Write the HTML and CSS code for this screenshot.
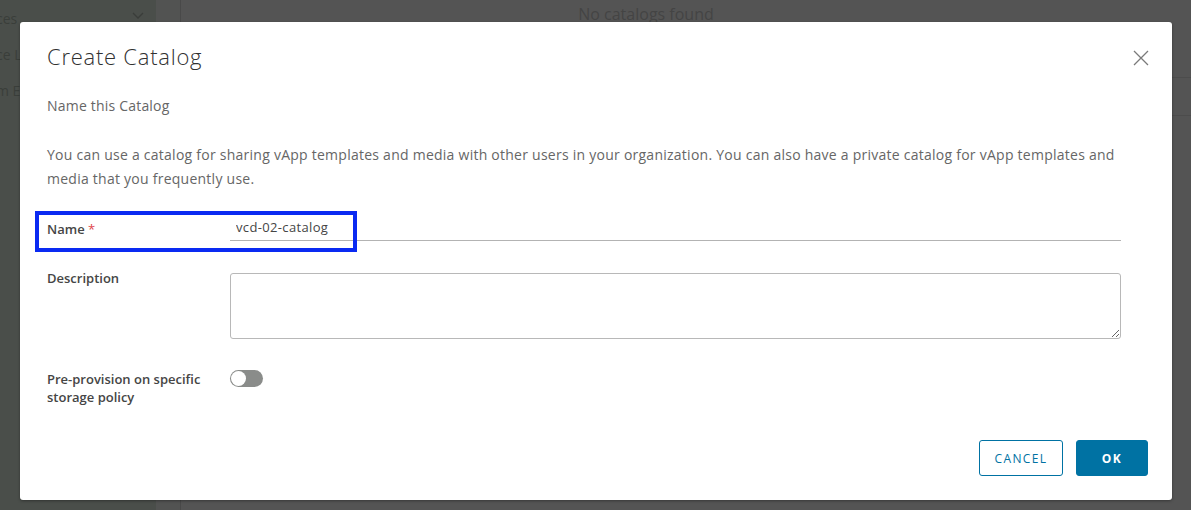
FILE: index.html
```html
<!DOCTYPE html>
<html>
<head>
<meta charset="utf-8">
<link rel="stylesheet" href="styles.css">
</head>
<body>
<div class="app">
  <aside class="sidebar">
    <div class="side-item side-head"><span>ces</span>
      <svg class="chev" width="12" height="8" viewBox="0 0 12 8"><path d="M1 1 L6 6 L11 1" fill="none" stroke="#3a3d3a" stroke-width="1.3"/></svg>
    </div>
    <div class="side-item">ce L</div>
    <div class="side-item">m E</div>
  </aside>
  <div class="gutter"></div>
  <main class="main">
    <div class="empty">No catalogs found</div>
    <div class="rows"><div class="row"></div><div class="row"></div></div>
  </main>
</div>

<div class="modal">
  <header class="modal-head">
    <h1 class="title">Create Catalog</h1>
    <button class="close" aria-label="Close">
      <svg width="16" height="16" viewBox="0 0 16 16"><path d="M1 1 L15 15 M15 1 L1 15" stroke="#7a7a7a" stroke-width="1.3" fill="none"/></svg>
    </button>
  </header>
  <p class="subtitle">Name this Catalog</p>
  <p class="intro">You can use a catalog for sharing vApp templates and media with other users in your organization. You can also have a private catalog for vApp templates and media that you frequently use.</p>

  <form class="form">
    <div class="field field-name">
      <label class="label">Name <span class="req">*</span></label>
      <div class="control"><input class="input" type="text" value="vcd-02-catalog"></div>
      <div class="highlight"></div>
    </div>
    <div class="field field-desc">
      <label class="label">Description</label>
      <div class="control"><textarea class="textarea"></textarea></div>
    </div>
    <div class="field field-toggle">
      <label class="label">Pre-provision on specific storage policy</label>
      <div class="control"><span class="toggle"><span class="knob"></span></span></div>
    </div>
  </form>

  <footer class="modal-foot">
    <button class="btn btn-outline">CANCEL</button>
    <button class="btn btn-primary">OK</button>
  </footer>
</div>
</body>
</html>
```

FILE: styles.css
```css
html, body {
  margin: 0;
  padding: 0;
  height: 100%;
}
body {
  background: #545454;
  font-family: "Open Sans", "Noto Sans", sans-serif;
  overflow: hidden;
}
.app {
  display: flex;
  height: 510px;
}
.sidebar {
  width: 156px;
  background: #4a4e4a;
  color: #3a3e3a;
  font-size: 14px;
}
.side-item {
  height: 36px;
  display: flex;
  align-items: center;
  justify-content: space-between;
  padding: 0 12px 0 0;
  margin-left: -4px;
}
.side-head { height: 36px; }
.chev { margin-top: -4px; }
.gutter {
  width: 24px;
  background: #525352;
  border-right: 1px solid #494949;
}
.main {
  flex: 1;
  background: #545454;
  position: relative;
}
.empty {
  text-align: center;
  color: #444;
  font-size: 16px;
  padding-top: 3px;
  padding-right: 80px;
}
.rows { margin-top: 15px; }
.row {
  height: 37px;
  border-bottom: 1px solid #4c4c4c;
}

.modal {
  position: absolute;
  left: 20px;
  top: 22px;
  width: 1152px;
  height: 478px;
  box-sizing: border-box;
  background: #fff;
  border-radius: 3px;
  box-shadow: 0 1px 3px rgba(0,0,0,0.35);
  padding: 0 51px 0 27px;
  display: flex;
  flex-direction: column;
  color: #565656;
}
.modal-head {
  display: flex;
  justify-content: space-between;
  align-items: flex-start;
  padding-top: 19px;
}
.title {
  margin: 0;
  font-size: 22px;
  font-weight: 300;
  color: #313131;
  line-height: 30px;
  letter-spacing: 0.75px;
}
.close {
  background: none;
  border: 0;
  padding: 0;
  margin-top: 9px;
  margin-right: -28px;
  width: 16px;
  height: 16px;
  cursor: pointer;
}
.subtitle {
  margin: 25px 0 0;
  font-size: 14px;
  line-height: 20px;
  color: #666;
  letter-spacing: 0.2px;
}
.intro {
  margin: 27px 0 0;
  font-size: 14px;
  line-height: 24px;
  color: #666;
  letter-spacing: 0.25px;
}
.form {
  margin-top: 22px;
  display: flex;
  flex-direction: column;
}
.field {
  display: grid;
  grid-template-columns: 183px 1fr;
  position: relative;
}
.label {
  font-size: 13px;
  font-weight: 600;
  color: #454545;
  line-height: 18px;
}
.req { color: #e0464b; font-weight: 400; }
.field-name { height: 32px; align-items: start; }
.field-name .label { padding-top: 7px; }
.input {
  width: 100%;
  box-sizing: border-box;
  border: 0;
  border-bottom: 1px solid #b3b3b3;
  font-family: inherit;
  font-size: 13px;
  letter-spacing: 0.35px;
  color: #454545;
  padding: 4px 6px 4px;
  height: 28px;
  outline: none;
}
.highlight {
  position: absolute;
  left: -12px;
  top: -2px;
  width: 322px;
  height: 41px;
  border: 4px solid #0a2af2;
  box-sizing: border-box;
  pointer-events: none;
}
.field-desc { margin-top: 28px; }
.field-desc .label { margin-top: -4px; }
.textarea {
  display: block;
  width: 100%;
  height: 66px;
  box-sizing: border-box;
  border: 1px solid #b8b8b8;
  border-radius: 3px;
  font-family: inherit;
  resize: vertical;
  margin: 0;
}
.field-toggle { margin-top: 31px; }
.field-toggle .label { padding-top: 0; width: 165px; }
.toggle {
  display: block;
  width: 33px;
  height: 17px;
  margin-top: 0;
  border-radius: 9px;
  background: #8a8c8a;
  position: relative;
}
.knob {
  position: absolute;
  left: 1px;
  top: 1px;
  width: 15px;
  height: 15px;
  border-radius: 50%;
  background: #fff;
}
.modal-foot {
  margin-top: auto;
  display: flex;
  justify-content: flex-end;
  gap: 13px;
  padding-bottom: 24px;
  margin-right: -27px;
}
.btn {
  height: 36px;
  border-radius: 3px;
  font-family: inherit;
  font-size: 12px;
  letter-spacing: 1.4px;
  box-sizing: border-box;
  cursor: pointer;
}
.btn-outline {
  width: 84px;
  background: #fff;
  border: 1px solid #0072a3;
  color: #0072a3;
  font-weight: 400;
}
.btn-primary {
  width: 72px;
  background: #0072a3;
  border: 1px solid #0072a3;
  color: #fff;
  font-weight: 700;
}
```
